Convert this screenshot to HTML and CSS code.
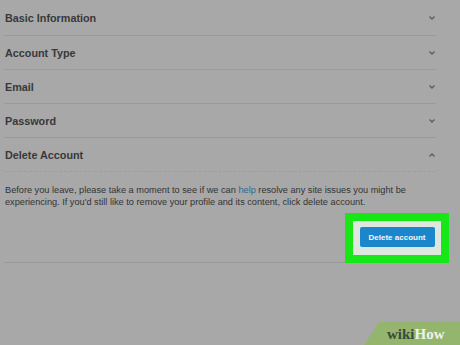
FILE: index.html
```html
<html>
<head>
    <title>Account settings</title>
    <link rel="stylesheet" href="styles.css">
</head>
<body>
<div class="settings">
    <div class="row"><span>Basic Information</span><svg class="chev" viewBox="0 0 6 4"><path d="M0.5 0.5 L3 3 L5.5 0.5"/></svg></div>
    <div class="row"><span>Account Type</span><svg class="chev" viewBox="0 0 6 4"><path d="M0.5 0.5 L3 3 L5.5 0.5"/></svg></div>
    <div class="row"><span>Email</span><svg class="chev" viewBox="0 0 6 4"><path d="M0.5 0.5 L3 3 L5.5 0.5"/></svg></div>
    <div class="row"><span>Password</span><svg class="chev" viewBox="0 0 6 4"><path d="M0.5 0.5 L3 3 L5.5 0.5"/></svg></div>
    <div class="row open"><span>Delete Account</span><svg class="chev" viewBox="0 0 6 4"><path d="M0.5 3.5 L3 1 L5.5 3.5"/></svg></div>
    <div class="panel">
        <p>Before you leave, please take a moment to see if we can <a href="#">help</a> resolve any site issues you might be<br>
        experiencing. If you'd still like to remove your profile and its content, click delete account.</p>
        <div class="actions">
            <div class="highlight">
                <div class="inner"><button>Delete account</button></div>
            </div>
        </div>
    </div>
</div>
<div class="wm"><span class="wiki">wiki</span><span class="how">How</span></div>
</body>
</html>
```

FILE: styles.css
```css
body {
    margin: 0;
    background: #a8a8a8;
    font-family: "Liberation Sans", Arial, sans-serif;
    color: #383838;
    width: 460px;
    height: 345px;
    overflow: hidden;
    position: relative;
}

.settings {
    width: 432px;
    margin-left: 4px;
}

.row {
    height: 34px;
    display: flex;
    align-items: center;
    justify-content: space-between;
    padding: 0 1px 0 1px;
    border-bottom: 1px solid #999;
    font-size: 10.8px;
    font-weight: bold;
    box-sizing: border-box;
}

.row:first-child {
    height: 36px;
}

.row.open {
    border-bottom: 1px dashed #9e9e9e;
}

.chev {
    width: 6px;
    height: 4px;
    fill: none;
    stroke: #5e5e5e;
    stroke-width: 1.4;
}

.panel {
    border-bottom: 1px solid #999;
    height: 78px;
    padding-top: 12px;
}

.panel p {
    margin: 0 0 0 1px;
    font-size: 9.2px;
    line-height: 12px;
    color: #333;
    white-space: nowrap;
}

.panel a {
    color: #2f6a8f;
    text-decoration: none;
}

.actions {
    display: flex;
    justify-content: flex-end;
    margin-right: -13px;
    margin-top: 5px;
}

.highlight {
    background: #17e617;
    width: 104px;
    height: 50px;
    box-sizing: border-box;
    padding: 8px;
}

.inner {
    background: #dfe6de;
    height: 34px;
    display: flex;
    align-items: center;
    justify-content: center;
}

button {
    background: #1c86cc;
    color: #f4f8fb;
    border: none;
    border-radius: 2px;
    font-family: "Liberation Sans", Arial, sans-serif;
    font-size: 8px;
    font-weight: bold;
    width: 75px;
    height: 20px;
    padding: 0;
    margin-top: -2px;
}

.wm {
    position: absolute;
    right: 0;
    bottom: 0;
    width: 96px;
    height: 23px;
    background: #93b56d;
    clip-path: polygon(16% 0, 100% 0, 100% 100%, 0 100%);
    font-family: "Liberation Serif", serif;
    font-weight: bold;
    font-size: 15px;
    line-height: 25px;
    padding-left: 23px;
    box-sizing: border-box;
}

.wiki {
    color: #3b4a3a;
}

.how {
    color: #eef2ea;
}
```
